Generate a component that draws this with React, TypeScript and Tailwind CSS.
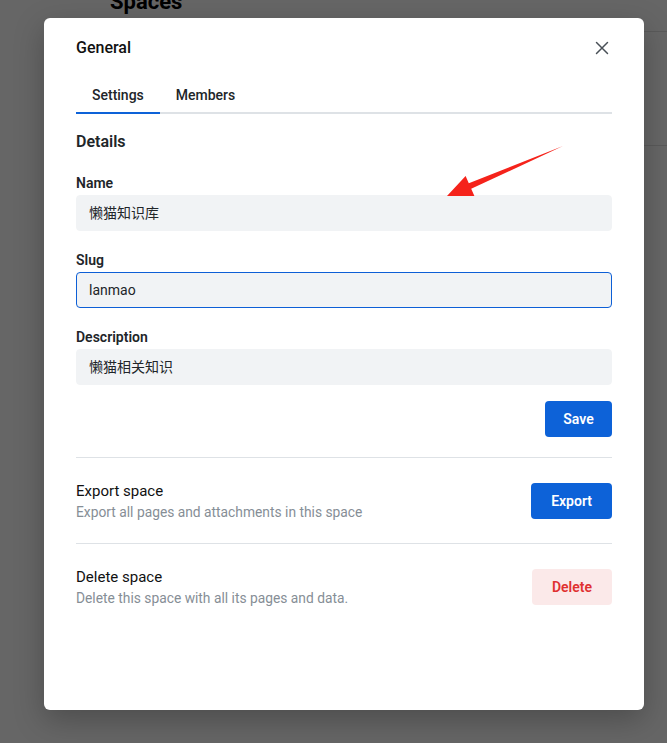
import { useState } from "react";

const FONT = "font-['Segoe_UI',Roboto,'Noto_Sans_CJK_SC',sans-serif]";

function CloseIcon() {
  return (
    <svg width="22" height="22" viewBox="0 0 24 24" fill="none" stroke="#495057" strokeWidth="1.6" strokeLinecap="round">
      <path d="M6 6l12 12M18 6L6 18" />
    </svg>
  );
}

function Field({ label, value, focused }: { label: string; value: string; focused?: boolean }) {
  return (
    <div className="mt-[19px]">
      <div className="text-[14px] leading-[20px] font-semibold text-[#212529]">{label}</div>
      <div
        className={`mt-[2px] h-[36px] rounded-[4px] bg-[#f1f3f5] flex items-center px-[12px] text-[14px] text-[#212529] border ${
          focused ? "border-[#0d5fd6]" : "border-[#f1f3f5]"
        }`}
      >
        {value}
      </div>
    </div>
  );
}

function ActionRow({
  title,
  desc,
  button,
  danger,
}: {
  title: string;
  desc: string;
  button: string;
  danger?: boolean;
}) {
  return (
    <div className="flex items-center justify-between pt-[23px] pb-[22px] border-b border-[#dee2e6] last:border-b-0">
      <div>
        <div className="text-[15px] leading-[20px] text-[#111]">{title}</div>
        <div className="mt-[2px] text-[13.8px] leading-[18px] text-[#868e96]">{desc}</div>
      </div>
      <button
        type="button"
        className={`h-[36px] px-[20px] rounded-[4px] text-[14px] font-semibold ${
          danger ? "bg-[#fbe9e9] text-[#e03131]" : "bg-[#0d62d8] text-white"
        }`}
      >
        {button}
      </button>
    </div>
  );
}

export default function App() {
  const [tab, setTab] = useState("settings");

  return (
    <div className={`relative w-[667px] h-[743px] overflow-hidden bg-white ${FONT}`}>
      {/* page behind the dialog */}
      <div className="pl-[110px]">
        <h1 className="-mt-[12px] text-[22px] leading-[28px] font-bold text-black">Spaces</h1>
        <div className="mt-[15px] h-px bg-[#e0e0e0]" />
        <div className="mt-[113px] h-px bg-[#e0e0e0]" />
      </div>

      {/* overlay */}
      <div className="absolute inset-0 bg-black/60" />

      {/* dialog */}
      <div className="absolute left-[44px] top-[18px] w-[600px] h-[692px] bg-white rounded-[6px] shadow-[0_10px_30px_rgba(0,0,0,0.25)] px-[32px]">
        <div className="h-[60px] flex items-center justify-between">
          <div className="text-[16px] font-medium text-[#111]">General</div>
          <button type="button" className="-mr-[1px]">
            <CloseIcon />
          </button>
        </div>

        <div className="flex border-b-2 border-[#dee2e6]">
          {[
            ["settings", "Settings"],
            ["members", "Members"],
          ].map(([key, label]) => (
            <button
              key={key}
              type="button"
              onClick={() => setTab(key)}
              className={`h-[36px] px-[16px] -mb-[2px] border-b-2 text-[14px] font-medium text-[#212529] ${
                tab === key ? "border-[#0d62d8]" : "border-transparent"
              }`}
            >
              {label}
            </button>
          ))}
        </div>

        <div className="mt-[16px] text-[16px] leading-[24px] font-semibold text-[#212529]">Details</div>
        <Field label="Name" value="懒猫知识库" />
        <Field label="Slug" value="lanmao" focused />
        <Field label="Description" value="懒猫相关知识" />

        <div className="mt-[16px] flex justify-end">
          <button type="button" className="h-[36px] w-[67px] rounded-[4px] bg-[#0d62d8] text-white text-[14px] font-semibold">
            Save
          </button>
        </div>

        <div className="mt-[20px] border-t border-[#dee2e6]">
          <ActionRow title="Export space" desc="Export all pages and attachments in this space" button="Export" />
          <ActionRow title="Delete space" desc="Delete this space with all its pages and data." button="Delete" danger />
        </div>
      </div>

      {/* annotation arrow */}
      <svg className="absolute inset-0 pointer-events-none" width="667" height="743">
        <polygon
          points="447,196 465.6,175.9 468.8,183.2 563,146 471.2,188.8 474.4,196.1"
          fill="#f5231b"
        />
      </svg>
    </div>
  );
}
